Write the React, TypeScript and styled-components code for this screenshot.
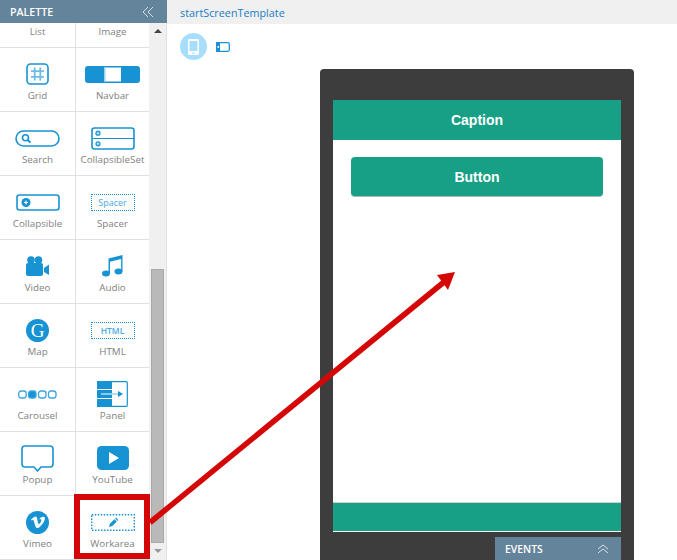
import React from "react";
import styled, { createGlobalStyle } from "styled-components";

const GlobalStyle = createGlobalStyle`
  html, body {
    margin: 0;
    padding: 0;
    background: #fff;
    overflow: hidden;
  }
  * {
    box-sizing: border-box;
  }
`;

const blue = "#1793d4";
const teal = "#17a085";
const slate = "#64849b";

const Page = styled.div`
  position: relative;
  width: 677px;
  height: 560px;
  display: flex;
  overflow: hidden;
  font-family: "Open Sans", sans-serif;
`;

const Palette = styled.aside`
  width: 167px;
  height: 560px;
  flex: none;
  display: flex;
  flex-direction: column;
`;

const PaletteHeader = styled.header`
  height: 23px;
  flex: none;
  background: ${slate};
  color: #fff;
  display: flex;
  align-items: center;
  justify-content: space-between;
  padding: 0 13px 0 10px;
  font-size: 10.6px;
  font-weight: 600;
`;

const PaletteBody = styled.div`
  flex: 1;
  display: flex;
  min-height: 0;
`;

const Items = styled.div`
  width: 149px;
  flex: none;
  display: flex;
  flex-direction: column;
`;

const Row = styled.div<{ $short?: boolean }>`
  height: ${(p) => (p.$short ? "25px" : "64px")};
  flex: none;
  display: grid;
  grid-template-columns: 76px 73px;
  border-bottom: 1px solid #dde1e4;
`;

const Cell = styled.div`
  display: flex;
  flex-direction: column;
  align-items: center;
  justify-content: flex-end;
  padding-bottom: 8px;
  &:first-child {
    border-right: 1px solid #dde1e4;
  }
`;

const IconSlot = styled.div`
  height: 26px;
  display: flex;
  align-items: center;
  justify-content: center;
  margin-bottom: 2px;
`;

const Label = styled.span`
  font-size: 9.8px;
  line-height: 14px;
  color: #7f7f7f;
  white-space: nowrap;
`;

const Scrollbar = styled.div`
  width: 18px;
  flex: none;
  background: #f0f0f0;
  border-right: 1px solid #e2e2e2;
  display: flex;
  flex-direction: column;
  align-items: center;
  position: relative;
`;

const ScrollArrow = styled.svg`
  display: block;
  margin-top: 6px;
`;

const ScrollThumb = styled.div`
  width: 13px;
  height: 274px;
  margin-top: 236px;
  background: #b9b9b9;
  border: 1px solid #a9a9a9;
`;

const Main = styled.main`
  flex: 1;
  min-width: 0;
  display: flex;
  flex-direction: column;
`;

const TopBar = styled.div`
  height: 24px;
  flex: none;
  background: #f0f0f0;
  padding-left: 13px;
  display: flex;
  align-items: center;
  color: #1a7dc4;
  font-size: 10.8px;
`;

const Canvas = styled.div`
  flex: 1;
  position: relative;
  padding-left: 153px;
`;

const ModeBar = styled.div`
  position: absolute;
  left: 13px;
  top: 9px;
  display: flex;
  align-items: center;
  gap: 9px;
`;

const ModeCircle = styled.div`
  width: 27px;
  height: 27px;
  border-radius: 50%;
  background: #a8defd;
  display: flex;
  align-items: center;
  justify-content: center;
`;

const Phone = styled.div`
  width: 314px;
  height: 500px;
  margin-top: 45px;
  background: #3d3d3d;
  border-radius: 4px 4px 0 0;
  padding: 31px 13px 0;
`;

const Screen = styled.div`
  height: 432px;
  background: #fff;
  display: flex;
  flex-direction: column;
`;

const Caption = styled.div`
  height: 40px;
  flex: none;
  background: ${teal};
  color: #fff;
  font: bold 14px "Liberation Sans", Arial, sans-serif;
  display: flex;
  align-items: center;
  justify-content: center;
`;

const AppButton = styled.div`
  height: 40px;
  margin: 17px 18px 0;
  background: ${teal};
  border-radius: 4px;
  border-bottom: 1px solid #a9b8b4;
  color: #fff;
  font: bold 14px "Liberation Sans", Arial, sans-serif;
  display: flex;
  align-items: center;
  justify-content: center;
`;

const Footer = styled.div`
  margin-top: auto;
  height: 30px;
  flex: none;
  background: ${teal};
  border-top: 1px solid #d0d0d0;
  border-bottom: 1px solid #fff;
`;

const EventsPanel = styled.div`
  position: absolute;
  left: 495px;
  top: 537px;
  width: 126px;
  height: 23px;
  background: ${slate};
  color: #fff;
  font-size: 10.4px;
  font-weight: 600;
  display: flex;
  align-items: center;
  justify-content: space-between;
  padding: 0 12px 0 10px;
`;

const Overlay = styled.svg`
  position: absolute;
  left: 0;
  top: 0;
  pointer-events: none;
`;

const DoubleChevron = ({ up, size = 12 }: { up?: boolean; size?: number }) => (
  <svg width={size} height={size} viewBox="0 0 12 12" fill="none" stroke="#d5dde2" strokeWidth="1">
    {up ? (
      <>
        <path d="M1 6l5-4 5 4" />
        <path d="M1 10l5-4 5 4" />
      </>
    ) : (
      <>
        <path d="M6 1L1 6l5 5" />
        <path d="M11 1L6 6l5 5" />
      </>
    )}
  </svg>
);

const GridIcon = () => (
  <svg width="23" height="22" viewBox="0 0 23 22" fill="none">
    <rect x="1" y="1" width="21" height="20" rx="3.500" stroke={blue} strokeWidth="1.600" />
    <path d="M8.700 4.500v13M14.300 4.500v13M5 8.200h13M5 13.800h13" stroke="#6cbce6" strokeWidth="1.800" />
  </svg>
);

const NavbarIcon = () => (
  <svg width="55" height="17" viewBox="0 0 55 17">
    <rect width="55" height="17" rx="3" fill={blue} />
    <rect x="19" y="1.500" width="17" height="14" fill="#fff" />
    <rect x="19" y="1.500" width="1.500" height="14" fill="#9ed2ee" />
  </svg>
);

const SearchIcon = () => (
  <svg width="45" height="17" viewBox="0 0 45 17" fill="none">
    <rect x="1" y="1" width="43" height="15" rx="7.500" stroke={blue} strokeWidth="1.600" />
    <circle cx="10.500" cy="7.800" r="3" stroke={blue} strokeWidth="1.600" />
    <path d="M12.500 10l3 2.500" stroke={blue} strokeWidth="2" />
  </svg>
);

const SetIcon = () => (
  <svg width="44" height="23" viewBox="0 0 44 23" fill="none">
    <rect x="1" y="1" width="42" height="21" rx="2.500" stroke={blue} strokeWidth="1.600" />
    <path d="M1 11.500h42" stroke={blue} strokeWidth="1.200" />
    <circle cx="7" cy="6.200" r="2.600" fill={blue} />
    <circle cx="7" cy="16.800" r="2.600" fill={blue} />
    <path d="M5.500 6.200h3M7 4.700v3M5.500 16.800h3M7 15.300v3" stroke="#fff" strokeWidth=".8" />
  </svg>
);

const CollapsibleIcon = () => (
  <svg width="44" height="17" viewBox="0 0 44 17" fill="none">
    <rect x="1" y="1" width="42" height="15" rx="2.500" stroke={blue} strokeWidth="1.600" />
    <circle cx="10" cy="8.500" r="4.500" fill={blue} />
    <path d="M8 8.500h4M10 6.500v4" stroke="#fff" strokeWidth="1.100" />
  </svg>
);

const DottedBox = styled.div<{ $bold?: boolean }>`
  width: 44px;
  height: 17px;
  border: 1.5px dotted ${blue};
  color: #4aa9de;
  font-size: ${(p) => (p.$bold ? "8.5px" : "9px")};
  font-weight: ${(p) => (p.$bold ? 600 : 400)};
  display: flex;
  align-items: center;
  justify-content: center;
`;

const VideoIcon = () => (
  <svg width="23" height="20" viewBox="0 0 23 20" fill={blue}>
    <circle cx="5" cy="4" r="3.800" />
    <circle cx="12.500" cy="4" r="3.800" />
    <rect x="0" y="7" width="17" height="13" rx="2" />
    <path d="M18 12l5-3.500v10.500L18 16z" />
  </svg>
);

const AudioIcon = () => (
  <svg width="22" height="22" viewBox="0 0 22 22" fill={blue}>
    <ellipse cx="4" cy="18.500" rx="4" ry="3" />
    <ellipse cx="16.500" cy="16.500" rx="4" ry="3" />
    <path d="M6.500 18.500V3.500L20.500 0v16.500h-1.400V4L8 6.800v11.700z" />
  </svg>
);

const CircleBadge = styled.div`
  width: 23px;
  height: 23px;
  border-radius: 50%;
  background: ${blue};
  color: #fff;
  display: flex;
  align-items: center;
  justify-content: center;
`;

const MapLetter = styled.span`
  font: 19px/23px "Liberation Serif", serif;
`;

const VimeoIcon = () => (
  <CircleBadge>
    <svg width="14" height="12" viewBox="0 0 14 12" fill="#fff">
      <path d="M13.900 2.800c-.1 1.300-1 3.200-2.900 5.600C9.100 10.900 7.500 12 6.200 12c-.8 0-1.500-.8-2-2.200L3.100 5.900C2.700 4.500 2.300 3.800 1.800 3.800c-.1 0-.5.200-1.100.7L0 3.600 2.100 1.700C3 .9 3.700.5 4.200.4c1.100-.1 1.800.7 2 2.300.3 1.800.5 2.900.6 3.300.3 1.500.7 2.200 1.100 2.200.3 0 .8-.5 1.400-1.400.6-1 1-1.700 1-2.200.1-.8-.2-1.300-1-1.300-.3 0-.7.100-1.100.2C9 1.800 10.400.6 12.400.7c1.100 0 1.600.7 1.500 2.100z" />
    </svg>
  </CircleBadge>
);

const CarouselIcon = () => (
  <svg width="39" height="11" viewBox="0 0 39 11" fill="none" stroke="#3ba5dc" strokeWidth="1.300">
    <rect x=".7" y="2" width="7.500" height="7" rx="2.500" />
    <rect x="10.500" y="2" width="7.500" height="7" rx="2.500" fill={blue} />
    <rect x="20.500" y="2" width="7.500" height="7" rx="2.500" />
    <rect x="30.500" y="2" width="7.500" height="7" rx="2.500" />
  </svg>
);

const PanelIcon = () => (
  <svg width="31" height="26" viewBox="0 0 31 26" fill="none">
    <rect x=".7" y=".7" width="29.600" height="24.600" rx="1" stroke={blue} strokeWidth="1.200" />
    <rect x="0" y="0" width="15" height="26" fill={blue} />
    <path d="M0 8.500h15M0 17.500h15" stroke="#fff" strokeWidth="1" />
    <path d="M4 13h11" stroke="#fff" strokeWidth="1" />
    <path d="M15 13h10" stroke="#6cbce6" strokeWidth="1" />
    <path d="M21 10l5 3-5 3z" fill={blue} />
  </svg>
);

const PopupIcon = () => (
  <svg width="33" height="27" viewBox="0 0 33 27" fill="none">
    <path
      d="M4 1h25a3 3 0 0 1 3 3v15a3 3 0 0 1-3 3h-9l-3.500 4-3.500-4H4a3 3 0 0 1-3-3V4a3 3 0 0 1 3-3z"
      stroke={blue}
      strokeWidth="1.600"
    />
  </svg>
);

const YouTubeIcon = () => (
  <svg width="32" height="24" viewBox="0 0 32 24">
    <rect width="32" height="24" rx="4.500" fill={blue} />
    <path d="M12 6l10 6-10 6z" fill="#fff" />
  </svg>
);

const WorkareaIcon = () => (
  <svg width="44" height="17" viewBox="0 0 44 17" fill="none">
    <rect x=".7" y=".7" width="42.600" height="15.600" stroke={blue} strokeWidth="1.400" strokeDasharray="1.500 1.500" />
    <path d="M18 13l.9-3.300 4.500-4.500 2.400 2.400-4.500 4.500z" fill={blue} />
    <path d="M24.100 4.500l.9-.9 2.400 2.400-.9.9z" fill={blue} />
  </svg>
);

type Item = { label: string; icon: React.ReactNode };

const rows: Item[][] = [
  [
    { label: "Grid", icon: <GridIcon /> },
    { label: "Navbar", icon: <NavbarIcon /> },
  ],
  [
    { label: "Search", icon: <SearchIcon /> },
    { label: "CollapsibleSet", icon: <SetIcon /> },
  ],
  [
    { label: "Collapsible", icon: <CollapsibleIcon /> },
    { label: "Spacer", icon: <DottedBox>Spacer</DottedBox> },
  ],
  [
    { label: "Video", icon: <VideoIcon /> },
    { label: "Audio", icon: <AudioIcon /> },
  ],
  [
    {
      label: "Map",
      icon: (
        <CircleBadge>
          <MapLetter>G</MapLetter>
        </CircleBadge>
      ),
    },
    { label: "HTML", icon: <DottedBox $bold>HTML</DottedBox> },
  ],
  [
    { label: "Carousel", icon: <CarouselIcon /> },
    { label: "Panel", icon: <PanelIcon /> },
  ],
  [
    { label: "Popup", icon: <PopupIcon /> },
    { label: "YouTube", icon: <YouTubeIcon /> },
  ],
  [
    { label: "Vimeo", icon: <VimeoIcon /> },
    { label: "Workarea", icon: <WorkareaIcon /> },
  ],
];

const App = () => {
  return (
    <Page>
      <GlobalStyle />
      <Palette>
        <PaletteHeader>
          PALETTE
          <DoubleChevron />
        </PaletteHeader>
        <PaletteBody>
          <Items>
            <Row $short>
              <Cell>
                <Label>List</Label>
              </Cell>
              <Cell>
                <Label>Image</Label>
              </Cell>
            </Row>
            {rows.map((row) => (
              <Row key={row[0].label}>
                {row.map((item) => (
                  <Cell key={item.label}>
                    <IconSlot>{item.icon}</IconSlot>
                    <Label>{item.label}</Label>
                  </Cell>
                ))}
              </Row>
            ))}
          </Items>
          <Scrollbar>
            <ScrollArrow width="8" height="4" viewBox="0 0 8 4">
              <path d="M0 4l4-4 4 4z" fill="#444" />
            </ScrollArrow>
            <ScrollThumb />
            <ScrollArrow width="8" height="4" viewBox="0 0 8 4">
              <path d="M0 0l4 4 4-4z" fill="#999" />
            </ScrollArrow>
          </Scrollbar>
        </PaletteBody>
      </Palette>
      <Main>
        <TopBar>startScreenTemplate</TopBar>
        <Canvas>
          <ModeBar>
            <ModeCircle>
              <svg width="11" height="16" viewBox="0 0 11 16">
                <rect width="11" height="16" rx="1.500" fill="#fff" />
                <rect x="1.500" y="2" width="8" height="10" fill="#a8defd" />
                <rect x="4.500" y="13.200" width="2" height="1.500" fill="#a8defd" />
              </svg>
            </ModeCircle>
            <svg width="14" height="10" viewBox="0 0 14 10" fill="none">
              <rect x=".7" y=".7" width="12.600" height="8.600" rx="1.500" stroke={blue} strokeWidth="1.300" />
              <rect x="0" y="0" width="4" height="10" fill={blue} />
              <rect x="1.500" y="4" width="1.500" height="2" fill="#fff" />
            </svg>
          </ModeBar>
          <Phone>
            <Screen>
              <Caption>Caption</Caption>
              <AppButton>Button</AppButton>
              <Footer />
            </Screen>
          </Phone>
        </Canvas>
      </Main>
      <EventsPanel>
        EVENTS
        <DoubleChevron up />
      </EventsPanel>
      <Overlay width="677" height="560" viewBox="0 0 677 560">
        <path d="M150 522.500L444 282" stroke="#d40606" strokeWidth="5.500" fill="none" />
        <path d="M455 272l-18 3 11 15z" fill="#d40606" />
        <rect x="77" y="497" width="70" height="59" fill="none" stroke="#d40606" strokeWidth="6" />
      </Overlay>
    </Page>
  );
};

export default App;
